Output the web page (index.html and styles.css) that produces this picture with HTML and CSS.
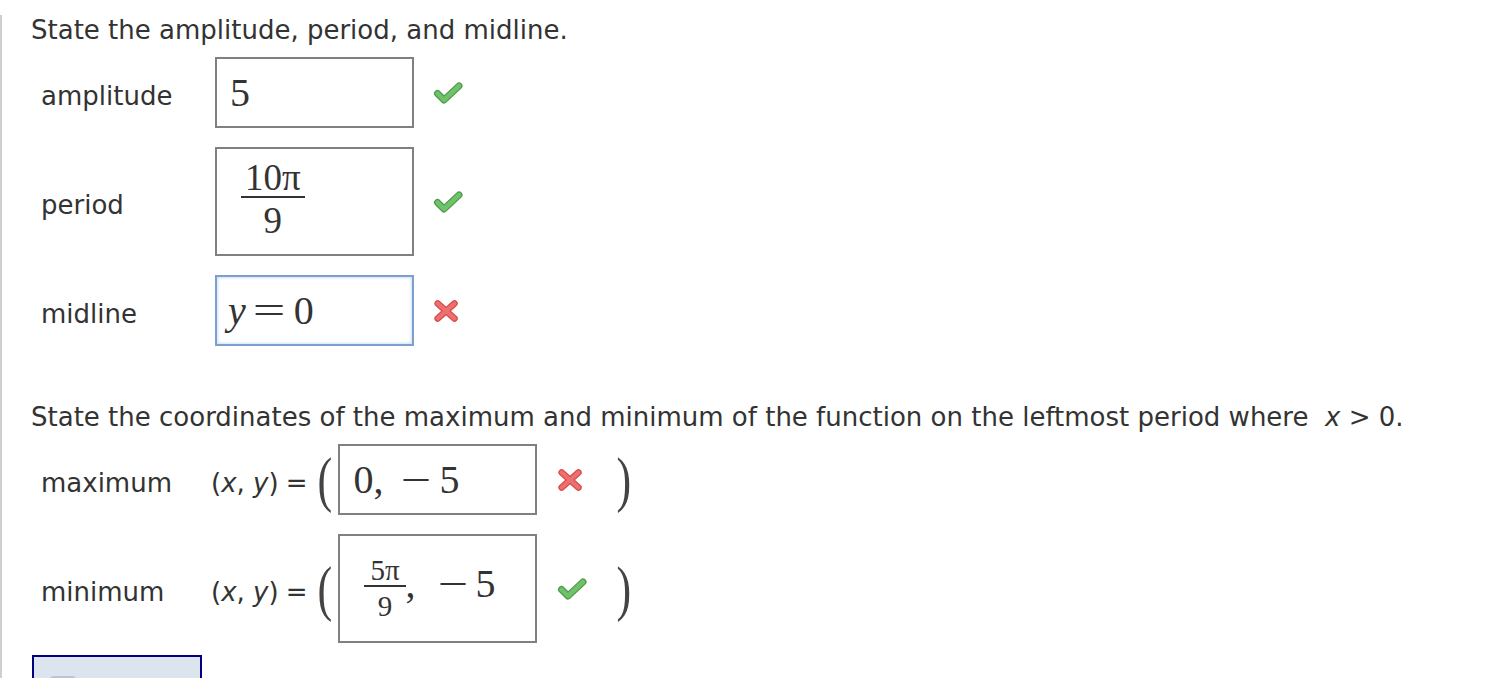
FILE: index.html
```html
<!DOCTYPE html>
<html lang="en">
<head>
    <meta charset="UTF-8">
    <meta name="viewport" content="width=device-width, initial-scale=1.0">
    <title>Amplitude, period and midline</title>
    <link rel="stylesheet" href="styles.css">
</head>
<body>
    <div class="page">
        <p class="prompt">State the amplitude, period, and midline.</p>

        <div class="row first">
            <span class="label">amplitude</span>
            <div class="answer"><span class="math">5</span></div>
            <span class="mark">
                <svg viewBox="0 0 30 24" width="30" height="24"><path d="M4.5 12.5 L11 19 L26 5" class="ok-edge"/><path d="M4.5 12.5 L11 19 L26 5" class="ok-fill"/></svg>
            </span>
        </div>

        <div class="row">
            <span class="label">period</span>
            <div class="answer tall">
                <span class="math frac">
                    <span class="num">10π</span>
                    <span class="den">9</span>
                </span>
            </div>
            <span class="mark">
                <svg viewBox="0 0 30 24" width="30" height="24"><path d="M4.5 12.5 L11 19 L26 5" class="ok-edge"/><path d="M4.5 12.5 L11 19 L26 5" class="ok-fill"/></svg>
            </span>
        </div>

        <div class="row">
            <span class="label">midline</span>
            <div class="answer active"><span class="math"><i class="var">y</i><span class="rel">=</span>0</span></div>
            <span class="mark">
                <svg viewBox="0 0 30 26" width="28" height="26"><path d="M5 5 L23 21 M23 5 L5 21" class="bad-edge"/><path d="M5 5 L23 21 M23 5 L5 21" class="bad-fill"/></svg>
            </span>
        </div>

        <p class="prompt second">State the coordinates of the maximum and minimum of the function on the leftmost period where &nbsp;<i>x</i> &gt; 0.</p>

        <div class="row first">
            <span class="label point">maximum</span>
            <span class="pair">(<i>x</i>, <i>y</i>)<span class="eq">=</span></span>
            <span class="paren">(</span>
            <div class="answer wide"><span class="math">0,<span class="op">−</span>5</span></div>
            <span class="mark">
                <svg viewBox="0 0 30 26" width="28" height="26"><path d="M5 5 L23 21 M23 5 L5 21" class="bad-edge"/><path d="M5 5 L23 21 M23 5 L5 21" class="bad-fill"/></svg>
            </span>
            <span class="paren close">)</span>
        </div>

        <div class="row">
            <span class="label point">minimum</span>
            <span class="pair">(<i>x</i>, <i>y</i>)<span class="eq">=</span></span>
            <span class="paren">(</span>
            <div class="answer wide tall">
                <span class="math frac small">
                    <span class="num">5π</span>
                    <span class="den">9</span>
                </span>
                <span class="math tail">,<span class="op gap">−</span>5</span>
            </div>
            <span class="mark">
                <svg viewBox="0 0 30 24" width="30" height="24"><path d="M4.5 12.5 L11 19 L26 5" class="ok-edge"/><path d="M4.5 12.5 L11 19 L26 5" class="ok-fill"/></svg>
            </span>
            <span class="paren close">)</span>
        </div>

        <div class="submit"><span class="submit-icon"></span></div>
    </div>
</body>
</html>
```

FILE: styles.css
```css
/* General Styling */
body {
    font-family: "DejaVu Sans", Verdana, sans-serif;
    margin: 0;
    padding: 0;
    background-color: #fff;
    color: #333;
    overflow: hidden;
}

.page {
    min-height: 100vh;
    box-sizing: border-box;
    border-left: 2px solid #cfcfcf;
    padding-left: 29px;
}

.prompt {
    margin: 15px 0 0;
    font-size: 26px;
    line-height: 30px;
}

.prompt.second {
    margin-top: 56px;
}

/* Answer rows */
.row {
    display: flex;
    align-items: center;
    padding-left: 10px;
    margin-top: 19px;
}

.row.first {
    margin-top: 12px;
}

.label {
    width: 174px;
    font-size: 26px;
    line-height: 30px;
    padding-top: 7px;
}

.label.point {
    width: 170px;
}

.pair {
    font-size: 26px;
    line-height: 30px;
    padding-top: 7px;
}

.pair .eq {
    margin-left: 7px;
}

.paren {
    display: inline-block;
    width: 14px;
    margin-left: 10px;
    font-family: "Liberation Serif", "Times New Roman", serif;
    font-size: 44px;
    line-height: 1;
    text-align: center;
    color: #444;
    transform: scaleY(1.4);
}

.paren.close {
    margin-left: 29px;
}

.answer {
    box-sizing: border-box;
    width: 199px;
    height: 71px;
    border: 2px solid #808080;
    display: flex;
    align-items: center;
    padding-left: 13px;
    background-color: #fff;
}

.answer.tall {
    height: 109px;
}

.answer.wide {
    margin-left: 7px;
}

.answer.active {
    border-color: #7c9fce;
    box-shadow: inset 0 0 3px 1px #cfe0f5;
}

/* Math */
.math {
    font-family: "Liberation Serif", "Times New Roman", serif;
    font-size: 40px;
    line-height: 1;
    color: #333;
}

.var {
    margin-left: -2px;
}

.rel {
    display: inline-block;
    width: 32px;
    margin: 0 9px 0 7px;
    text-align: center;
    transform: scaleX(1.45);
}

.op {
    display: inline-block;
    width: 26px;
    margin: 0 10px 0 20px;
    text-align: center;
    transform: scaleX(1.35);
}

.op.gap {
    margin-left: 24px;
}

.frac {
    display: inline-flex;
    flex-direction: column;
    align-items: stretch;
    margin-left: 11px;
    padding-bottom: 5px;
    font-size: 37px;
}

.frac .num {
    padding: 0 4px;
    text-align: center;
    border-bottom: 2px solid #333;
}

.frac .den {
    padding-top: 4px;
    text-align: center;
}

.frac.small {
    font-size: 29px;
    padding-bottom: 0;
}

.frac.small .num {
    padding: 0 6px;
}

.frac.small .den {
    padding-top: 5px;
}

.tail {
    padding-bottom: 9px;
}

/* Feedback marks */
.mark {
    display: flex;
    width: 30px;
    margin-left: 19px;
}

.wide + .mark {
    margin-left: 20px;
}

.mark path {
    fill: none;
    stroke-linecap: round;
    stroke-linejoin: round;
}

.ok-edge {
    stroke: #4e9a4a;
    stroke-width: 7;
}

.ok-fill {
    stroke: #6fc26a;
    stroke-width: 4.5;
}

.bad-edge {
    stroke: #d84a4a;
    stroke-width: 7;
}

.bad-fill {
    stroke: #ee6f6f;
    stroke-width: 4.5;
}

/* Submit button (cut off at the bottom) */
.submit {
    box-sizing: border-box;
    width: 170px;
    height: 48px;
    margin: 12px 0 0 1px;
    border: 2px solid #000080;
    background-color: #dce5ee;
}

.submit-icon {
    display: block;
    width: 26px;
    height: 18px;
    margin: 19px 0 0 16px;
    border-radius: 4px;
    background-color: #b9c5d3;
}
```
